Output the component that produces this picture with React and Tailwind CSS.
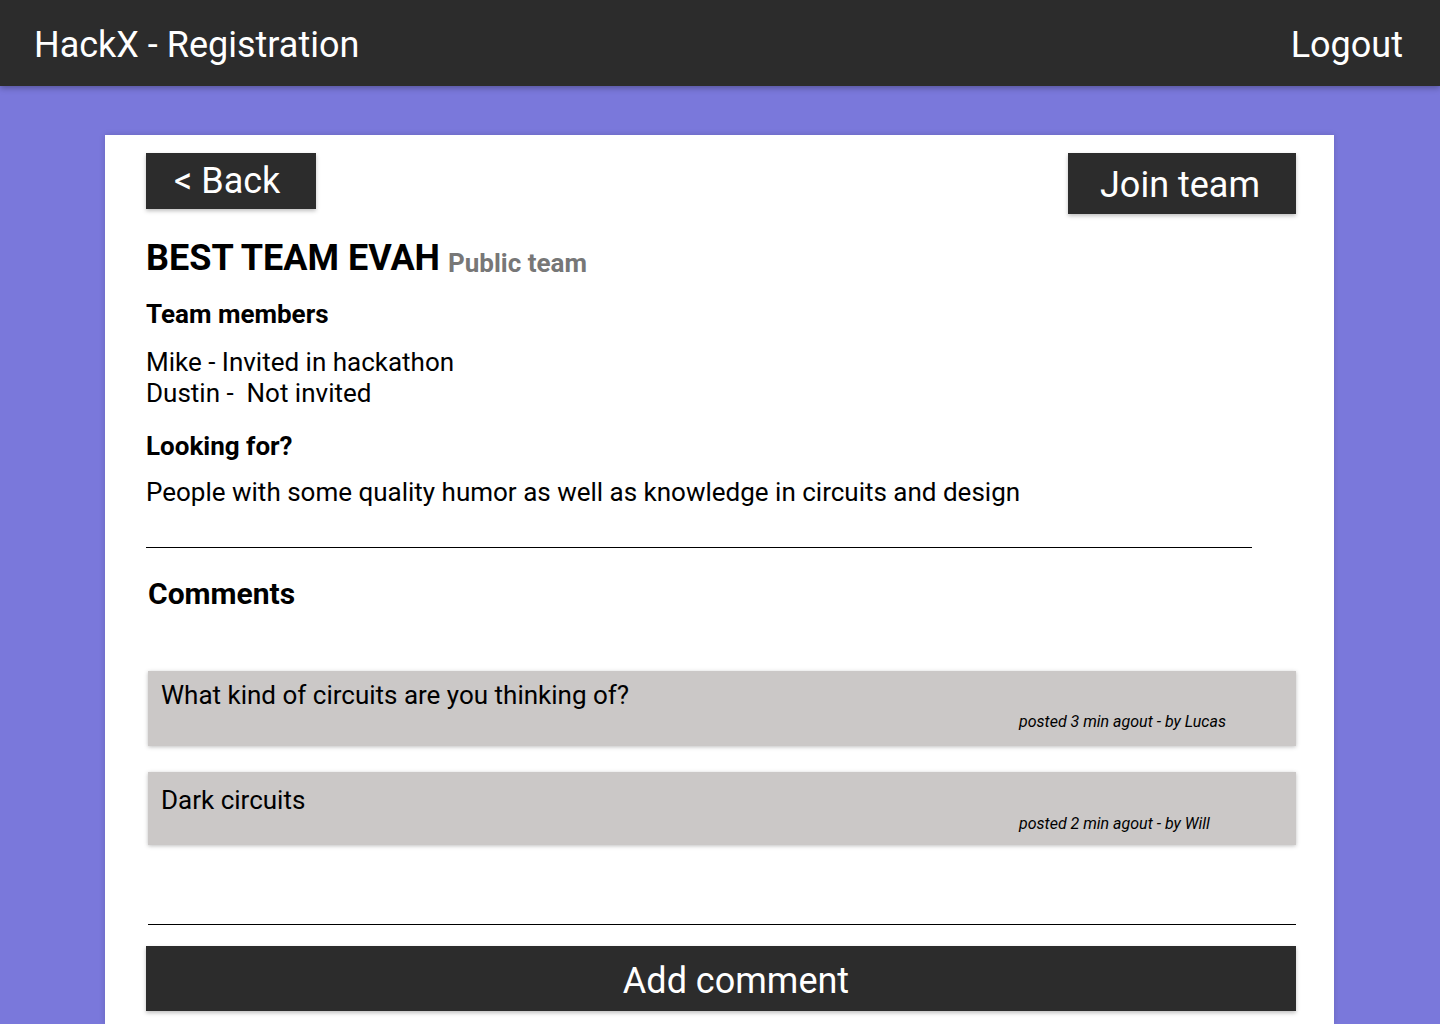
export default function App() {
  const font = { fontFamily: "Roboto, 'Liberation Sans', sans-serif" };
  return (
    <div className="w-full h-[1024px] overflow-hidden flex flex-col bg-[#7a78db]" style={font}>
      <header className="h-[86px] shrink-0 bg-[#2c2c2c] flex items-center justify-between pl-[34px] pr-[37px] pt-[4px] shadow-[0_2px_6px_rgba(0,0,0,0.3)] relative z-10">
        <div className="text-white text-[36px] leading-[42px]">HackX - Registration</div>
        <div className="text-white text-[36px] leading-[42px]">Logout</div>
      </header>
      <main className="flex-1 pt-[49px] pl-[105px] pr-[106px] flex flex-col">
        <div className="flex-1 bg-white pt-[18px] pl-[41px] pr-[38px] shadow-[0_0_6px_rgba(0,0,0,0.15)]">
          <div className="flex items-start justify-between">
            <button className="w-[170px] h-[56px] bg-[#2c2c2c] text-white text-[36px] leading-[42px] flex items-center pl-[28px] shadow-[0_2px_4px_rgba(0,0,0,0.25)]">
              &lt; Back
            </button>
            <button className="w-[228px] h-[61px] bg-[#2c2c2c] text-white text-[36px] leading-[42px] flex items-center pl-[32px] pt-[3px] shadow-[0_2px_4px_rgba(0,0,0,0.25)]">
              Join team
            </button>
          </div>
          <div className="mt-[23px] flex items-baseline gap-[8px]">
            <h1 className="text-[36px] leading-[42px] font-bold text-black">BEST TEAM EVAH</h1>
            <span className="text-[26px] leading-[30px] font-bold text-[#777777] relative top-[2px]">Public team</span>
          </div>
          <h2 className="mt-[20px] text-[26px] leading-[30px] font-bold text-black">Team members</h2>
          <div className="mt-[18px] text-[26px] leading-[31px] text-black">
            <div>Mike - Invited in hackathon</div>
            <div className="whitespace-pre">Dustin -  Not invited</div>
          </div>
          <h2 className="mt-[22px] text-[26px] leading-[30px] font-bold text-black">Looking for?</h2>
          <p className="mt-[16px] text-[26px] leading-[30px] text-black">
            People with some quality humor as well as knowledge in circuits and design
          </p>
          <div className="mt-[40px] w-[1106px] h-[1px] bg-black"></div>
          <h2 className="mt-[28px] ml-[2px] text-[30px] leading-[35px] font-bold text-black">Comments</h2>
          <div className="mt-[60px] ml-[2px] flex flex-col gap-[26px]">
            <div className="bg-[#cbc8c7] pl-[13px] pt-[9px] pb-[15px] shadow-[0_1px_4px_rgba(0,0,0,0.25)]">
              <div className="text-[26px] leading-[30px] text-black">What kind of circuits are you thinking of?</div>
              <div className="mt-[2px] ml-[858px] text-[16px] leading-[19px] italic text-black">posted 3 min agout - by Lucas</div>
            </div>
            <div className="bg-[#cbc8c7] pl-[13px] pt-[13px] pb-[12px] shadow-[0_1px_4px_rgba(0,0,0,0.25)]">
              <div className="text-[26px] leading-[30px] text-black">Dark circuits</div>
              <div className="-mt-[1px] ml-[858px] text-[16px] leading-[19px] italic text-black">posted 2 min agout - by Will</div>
            </div>
          </div>
          <div className="mt-[79px] ml-[2px] h-[1px] bg-black"></div>
          <button className="mt-[21px] w-full h-[65px] bg-[#2c2c2c] text-white text-[36px] leading-[42px] flex items-center justify-center pl-[30px] pt-[5px] shadow-[0_2px_4px_rgba(0,0,0,0.25)]">
            Add comment
          </button>
        </div>
      </main>
    </div>
  );
}
